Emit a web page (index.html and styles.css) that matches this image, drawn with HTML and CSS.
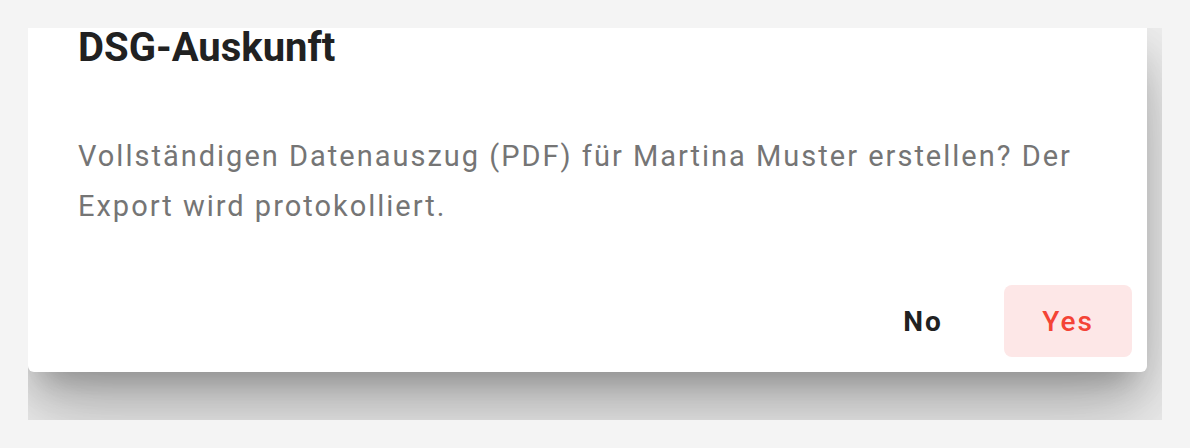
FILE: index.html
```html
<!DOCTYPE html>
<html>
	<head>
		<title>DSG-Auskunft</title>
		<meta charset="utf-8">
		<link rel="stylesheet" href="styles.css">
	</head>
	<body>
		<div class="stage">
			<div class="dialog">
				<h2 class="dialogTitle">DSG-Auskunft</h2>
				<p class="dialogText">Vollständigen Datenauszug (PDF) für Martina Muster erstellen? Der Export wird protokolliert.</p>
				<div class="dialogActions">
					<button class="btn">No</button>
					<button class="btn btnConfirm">Yes</button>
				</div>
			</div>
		</div>
	</body>
</html>
```

FILE: styles.css
```css
body {
	margin: 0;
	background-color: #f4f4f4;
	font-family: Roboto, "Liberation Sans", sans-serif;
}

.stage {
	margin: 28px;
	width: 1134px;
	height: 392px;
	overflow: hidden;
	background-color: #f4f4f4;
}

.dialog {
	width: 1119px;
	background-color: #fff;
	border-radius: 0 0 6px 6px;
	box-shadow: 0 22px 30px -14px rgba(0, 0, 0, 0.26),
		0 48px 76px 6px rgba(0, 0, 0, 0.16),
		0 18px 92px 16px rgba(0, 0, 0, 0.12);
}

.dialogTitle {
	margin: 0;
	padding: 0 50px;
	font-size: 40px;
	line-height: 40px;
	font-weight: 700;
	color: #212121;
}

.dialogText {
	margin: 0;
	padding: 63px 50px 0;
	font-size: 29px;
	line-height: 50px;
	letter-spacing: 2px;
	color: #757575;
}

.dialogActions {
	display: flex;
	justify-content: flex-end;
	gap: 17px;
	padding: 54px 15px 15px;
}

.btn {
	width: 128px;
	height: 72px;
	border: none;
	border-radius: 8px;
	background: transparent;
	font-family: Roboto, "Liberation Sans", sans-serif;
	font-size: 28px;
	font-weight: 700;
	letter-spacing: 2px;
	color: #212121;
}

.btnConfirm {
	background-color: #fde7e7;
	color: #f44336;
	font-weight: 500;
}
```
